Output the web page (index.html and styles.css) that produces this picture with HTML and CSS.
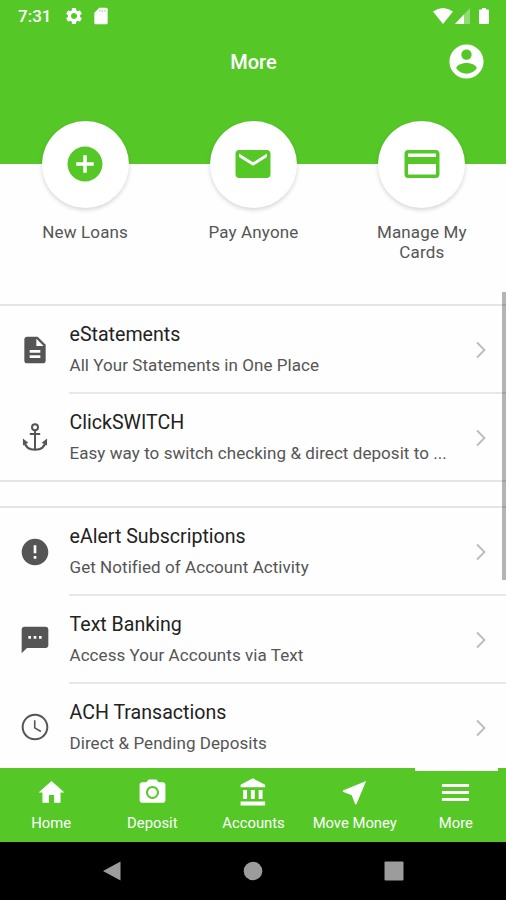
FILE: index.html
```html
<!DOCTYPE html>
<html lang="en">
<head>
    <meta charset="UTF-8">
    <meta name="viewport" content="width=device-width, initial-scale=1.0">
    <title>More</title>
    <link rel="stylesheet" href="styles.css">
</head>
<body>
    <header class="header">
        <div class="status-bar">
            <span class="time">7:31</span>
            <svg class="status-icon" viewBox="0 0 24 24"><path d="M19.14 12.94c.04-.3.06-.61.06-.94 0-.32-.02-.64-.07-.94l2.03-1.58c.18-.14.23-.41.12-.61l-1.92-3.32c-.12-.22-.37-.29-.59-.22l-2.39.96c-.5-.38-1.03-.7-1.62-.94l-.36-2.54c-.04-.24-.24-.41-.48-.41h-3.84c-.24 0-.43.17-.47.41l-.36 2.54c-.59.24-1.13.57-1.62.94l-2.39-.96c-.22-.08-.47 0-.59.22L2.74 8.87c-.12.21-.08.47.12.61l2.03 1.58c-.05.3-.09.63-.09.94s.02.64.07.94l-2.03 1.58c-.18.14-.23.41-.12.61l1.92 3.32c.12.22.37.29.59.22l2.39-.96c.5.38 1.03.7 1.62.94l.36 2.54c.05.24.24.41.48.41h3.84c.24 0 .44-.17.47-.41l.36-2.54c.59-.24 1.13-.56 1.62-.94l2.39.96c.22.08.47 0 .59-.22l1.92-3.32c.12-.22.07-.47-.12-.61l-2.01-1.58zM12 15.6c-1.98 0-3.6-1.62-3.6-3.6s1.62-3.6 3.6-3.6 3.6 1.62 3.6 3.6-1.62 3.6-3.6 3.6z"/></svg>
            <svg class="status-icon sd" viewBox="0 0 24 24"><path d="M18 2h-8L4 8v12c0 1.100.9 2 2 2h12c1.100 0 2-.9 2-2V4c0-1.100-.9-2-2-2z"/><path class="slots" d="M10 4.500h1.500v2.500H10zM13 4.500h1.500v2.500H13zM16 4.500h1.500v2.500H16z"/></svg>
            <div class="signals">
                <svg width="20" height="16" viewBox="0 0 20 16"><path d="M0 3.500Q10-3.500 20 3.500L10 16z"/></svg>
                <svg width="15" height="16" viewBox="0 0 15 16"><path opacity=".35" d="M15 0v16H0z"/><path d="M9 6.400V16H0z"/></svg>
                <svg class="battery" width="10" height="16" viewBox="0 0 10 16"><path d="M3 0h4v1.600h2q1 0 1 1V15q0 1-1 1H1q-1 0-1-1V2.600q0-1 1-1h2z"/></svg>
            </div>
        </div>
        <div class="title-bar">
            <h1>More</h1>
            <svg class="account" viewBox="0 0 24 24"><path d="M12 2C6.480 2 2 6.480 2 12s4.480 10 10 10 10-4.480 10-10S17.520 2 12 2zm0 3c1.660 0 3 1.340 3 3s-1.340 3-3 3-3-1.340-3-3 1.340-3 3-3zm0 14.200c-2.500 0-4.710-1.280-6-3.220.03-1.990 4-3.080 6-3.080 1.990 0 5.970 1.090 6 3.080-1.290 1.940-3.500 3.220-6 3.220z"/></svg>
        </div>
    </header>

    <section class="actions">
        <div class="action">
            <div class="circle"><svg viewBox="0 0 24 24"><path d="M12 2C6.480 2 2 6.480 2 12s4.480 10 10 10 10-4.480 10-10S17.520 2 12 2zm5 11h-4v4h-2v-4H7v-2h4V7h2v4h4v2z"/></svg></div>
            <span>New Loans</span>
        </div>
        <div class="action">
            <div class="circle"><svg viewBox="0 0 24 24"><path d="M20 4H4c-1.100 0-1.990.9-1.990 2L2 18c0 1.100.9 2 2 2h16c1.100 0 2-.9 2-2V6c0-1.100-.9-2-2-2zm0 4l-8 5-8-5V6l8 5 8-5v2z"/></svg></div>
            <span>Pay Anyone</span>
        </div>
        <div class="action">
            <div class="circle"><svg viewBox="0 0 24 24"><path d="M20 4H4c-1.110 0-1.990.89-1.990 2L2 18c0 1.110.89 2 2 2h16c1.110 0 2-.89 2-2V6c0-1.110-.89-2-2-2zm0 14H4v-6h16v6zm0-10H4V6h16v2z"/></svg></div>
            <span>Manage My Cards</span>
        </div>
    </section>

    <main class="lists">
        <div class="scrollbar"></div>
        <ul class="list">
            <li class="item">
                <svg class="item-icon" viewBox="0 0 24 24"><path d="M14 2H6c-1.100 0-1.990.9-1.990 2L4 20c0 1.100.89 2 1.990 2H18c1.100 0 2-.9 2-2V8l-6-6zm2 16H8v-2h8v2zm0-4H8v-2h8v2zm-3-5V3.500L18.500 9H13z"/></svg>
                <div class="item-body">
                    <div class="text"><h2>eStatements</h2><p>All Your Statements in One Place</p></div>
                    <svg class="chevron" viewBox="0 0 10 18"><path d="M1 1.500l7.500 7.500L1 16.500"/></svg>
                </div>
            </li>
            <li class="item">
                <svg class="item-icon anchor" viewBox="0 0 32 32"><circle cx="16" cy="6.200" r="3"/><path d="M16 9.200v19M10.800 13h10.400M5.300 20.500c1 5.500 4.700 8.200 10.700 8.200s9.700-2.700 10.700-8.200"/><path class="tip" d="M3.900 17.500l5.400 4.200-5.300 2.800zM28.100 17.500l-5.400 4.200 5.300 2.800z"/></svg>
                <div class="item-body">
                    <div class="text"><h2>ClickSWITCH</h2><p>Easy way to switch checking &amp; direct deposit to ...</p></div>
                    <svg class="chevron" viewBox="0 0 10 18"><path d="M1 1.500l7.500 7.500L1 16.500"/></svg>
                </div>
            </li>
        </ul>
        <ul class="list">
            <li class="item">
                <svg class="item-icon" viewBox="0 0 24 24"><path d="M12 2C6.480 2 2 6.480 2 12s4.480 10 10 10 10-4.480 10-10S17.520 2 12 2zm1 15h-2v-2h2v2zm0-4h-2V7h2v6z"/></svg>
                <div class="item-body">
                    <div class="text"><h2>eAlert Subscriptions</h2><p>Get Notified of Account Activity</p></div>
                    <svg class="chevron" viewBox="0 0 10 18"><path d="M1 1.500l7.500 7.500L1 16.500"/></svg>
                </div>
            </li>
            <li class="item">
                <svg class="item-icon" viewBox="0 0 24 24"><path d="M20 2H4c-1.100 0-1.990.9-1.990 2L2 22l4-4h14c1.100 0 2-.9 2-2V4c0-1.100-.9-2-2-2zM9 11H7V9h2v2zm4 0h-2V9h2v2zm4 0h-2V9h2v2z"/></svg>
                <div class="item-body">
                    <div class="text"><h2>Text Banking</h2><p>Access Your Accounts via Text</p></div>
                    <svg class="chevron" viewBox="0 0 10 18"><path d="M1 1.500l7.500 7.500L1 16.500"/></svg>
                </div>
            </li>
            <li class="item">
                <svg class="item-icon" viewBox="0 0 24 24"><path d="M11.990 2C6.470 2 2 6.480 2 12s4.470 10 9.990 10C17.520 22 22 17.520 22 12S17.520 2 11.990 2zM12 20.500c-4.700 0-8.500-3.800-8.500-8.500s3.800-8.500 8.500-8.500 8.500 3.800 8.500 8.500-3.800 8.500-8.500 8.500zM12.400 7h-1.200v6l4.900 2.900.6-1-4.300-2.600z"/></svg>
                <div class="item-body">
                    <div class="text"><h2>ACH Transactions</h2><p>Direct &amp; Pending Deposits</p></div>
                    <svg class="chevron" viewBox="0 0 10 18"><path d="M1 1.500l7.500 7.500L1 16.500"/></svg>
                </div>
            </li>
        </ul>
    </main>

    <nav class="tabs">
        <div class="tab">
            <svg viewBox="0 0 24 24"><path d="M10 20v-6h4v6h5v-8h3L12 3 2 12h3v8z"/></svg>
            <span>Home</span>
        </div>
        <div class="tab">
            <svg viewBox="0 0 24 24"><path fill-rule="evenodd" d="M9 2L7.170 4H4c-1.100 0-2 .9-2 2v12c0 1.100.9 2 2 2h16c1.100 0 2-.9 2-2V6c0-1.100-.9-2-2-2h-3.170L15 2H9zm3 15c-2.760 0-5-2.240-5-5s2.240-5 5-5 5 2.240 5 5-2.240 5-5 5zm0-1.500a3.500 3.500 0 1 0 0-7 3.500 3.500 0 0 0 0 7z"/></svg>
            <span>Deposit</span>
        </div>
        <div class="tab">
            <svg viewBox="0 0 24 24"><path d="M4 10v7h3v-7H4zm6 0v7h3v-7h-3zM2 22h19v-3H2v3zm14-12v7h3v-7h-3zm-4.500-9L2 6v2h19V6l-9.500-5z"/></svg>
            <span>Accounts</span>
        </div>
        <div class="tab">
            <svg viewBox="0 0 24 24"><path d="M21 3L3 10.530v.98l6.840 2.650L12.480 21h.98L21 3z"/></svg>
            <span>Move Money</span>
        </div>
        <div class="tab active">
            <svg viewBox="0 0 24 24"><path d="M1.500 18.500h21v-2.300h-21v2.300zm0-5.400h21v-2.200h-21v2.200zm0-7.600v2.300h21V5.500h-21z"/></svg>
            <span>More</span>
        </div>
    </nav>

    <div class="system-nav">
        <svg viewBox="0 0 20 20"><path d="M1 10L18.500.5v19z"/></svg>
        <svg viewBox="0 0 20 20"><circle cx="10" cy="10" r="9.300"/></svg>
        <svg viewBox="0 0 20 20"><rect x=".5" y=".5" width="19" height="19" rx="1"/></svg>
    </div>
</body>
</html>
```

FILE: styles.css
```css
* {
    box-sizing: border-box;
}

body {
    font-family: Roboto, sans-serif;
    display: flex;
    flex-direction: column;
    height: 900px;
    margin: 0;
    background: #fefefe;
    overflow: hidden;
}

svg {
    display: block;
    flex: none;
    fill: currentColor;
}

h1, h2, p, ul {
    margin: 0;
    padding: 0;
}

.header {
    height: 164px;
    flex: none;
    background: #55c828;
    color: white;
}

.status-bar {
    display: flex;
    align-items: center;
    height: 31px;
    padding: 0 17px 0 18px;
}

.time {
    width: 46px;
    font-size: 17px;
    font-weight: 500;
}

.status-icon {
    width: 20px;
    height: 20px;
}

.sd {
    margin-left: 7px;
}

.slots {
    fill: #a6e28e;
}

.signals {
    display: flex;
    gap: 2px;
    margin-left: auto;
}

.battery {
    margin-left: 7px;
}

.title-bar {
    display: grid;
    grid-template-columns: 1fr auto 1fr;
    align-items: center;
    height: 60px;
    padding: 0 19px 0 20px;
}

.title-bar h1 {
    grid-column: 2;
    padding-top: 2px;
    font-size: 20px;
    font-weight: 500;
}

.account {
    justify-self: end;
    width: 41px;
    height: 41px;
}

.actions {
    display: grid;
    grid-template-columns: repeat(3, 1fr);
    height: 184px;
    margin-top: -43px;
    padding-left: 1px;
    flex: none;
}

.action {
    display: flex;
    flex-direction: column;
    align-items: center;
    gap: 14px;
    color: #555;
    font-size: 17px;
    letter-spacing: 0.15px;
    line-height: 20px;
    text-align: center;
}

.action span {
    width: 110px;
}

.circle {
    display: flex;
    align-items: center;
    justify-content: center;
    width: 87px;
    height: 87px;
    border-radius: 50%;
    background: white;
    color: #55c828;
    box-shadow: 0 2px 4px rgba(0,0,0,0.16);
}

.circle svg {
    width: 42px;
    height: 42px;
    margin-bottom: 1px;
}

.lists {
    position: relative;
    flex: 1;
    overflow: hidden;
    margin-top: -13px;
    padding-top: 12px;
}

.scrollbar {
    position: absolute;
    top: 0;
    right: 0;
    width: 4px;
    height: 288px;
    background: rgba(0,0,0,0.29);
}

.list {
    margin-bottom: 24px;
    border-top: 2px solid #e4e4e4;
    border-bottom: 2px solid #e4e4e4;
    list-style: none;
}

.item {
    display: flex;
    align-items: center;
    padding-left: 19px;
    color: #555;
}

.item-icon {
    width: 32px;
    height: 32px;
    margin-right: 18px;
}

.anchor {
    fill: none;
    stroke: #555;
    stroke-width: 2;
}

.anchor .tip {
    fill: #555;
    stroke: none;
}

.item-body {
    display: flex;
    flex: 1;
    align-items: center;
    justify-content: space-between;
    height: 88px;
    padding-top: 2px;
    padding-right: 20px;
    border-bottom: 2px solid #e8e8e8;
}

.item:last-child .item-body {
    height: 86px;
    border-bottom: none;
}

.text {
    padding-left: 0.5px;
}

.text h2 {
    color: #222;
    font-size: 19.6px;
    font-weight: 400;
    line-height: 30px;
}

.text p {
    font-size: 17px;
    letter-spacing: 0.06px;
    line-height: 31px;
}

.chevron {
    width: 10px;
    height: 18px;
    fill: none;
    stroke: #bbb;
    stroke-width: 1.8;
}

.tabs {
    display: grid;
    grid-template-columns: repeat(5, 1fr);
    height: 74px;
    flex: none;
    background: #55c828;
    color: white;
}

.tab {
    position: relative;
    display: flex;
    flex-direction: column;
    align-items: center;
    padding-top: 9px;
    padding-left: 1px;
    gap: 6px;
    font-size: 14.8px;
    line-height: 18px;
    white-space: nowrap;
}

.tab svg {
    width: 31px;
    height: 31px;
}

.tab.active::before {
    content: "";
    position: absolute;
    top: 0;
    left: 10px;
    right: 8px;
    height: 3px;
    background: white;
}

.system-nav {
    display: flex;
    align-items: center;
    justify-content: space-between;
    height: 58px;
    flex: none;
    padding: 0 102px;
    background: black;
    color: #9c9c9c;
}

.system-nav svg {
    width: 20px;
    height: 20px;
}
```
